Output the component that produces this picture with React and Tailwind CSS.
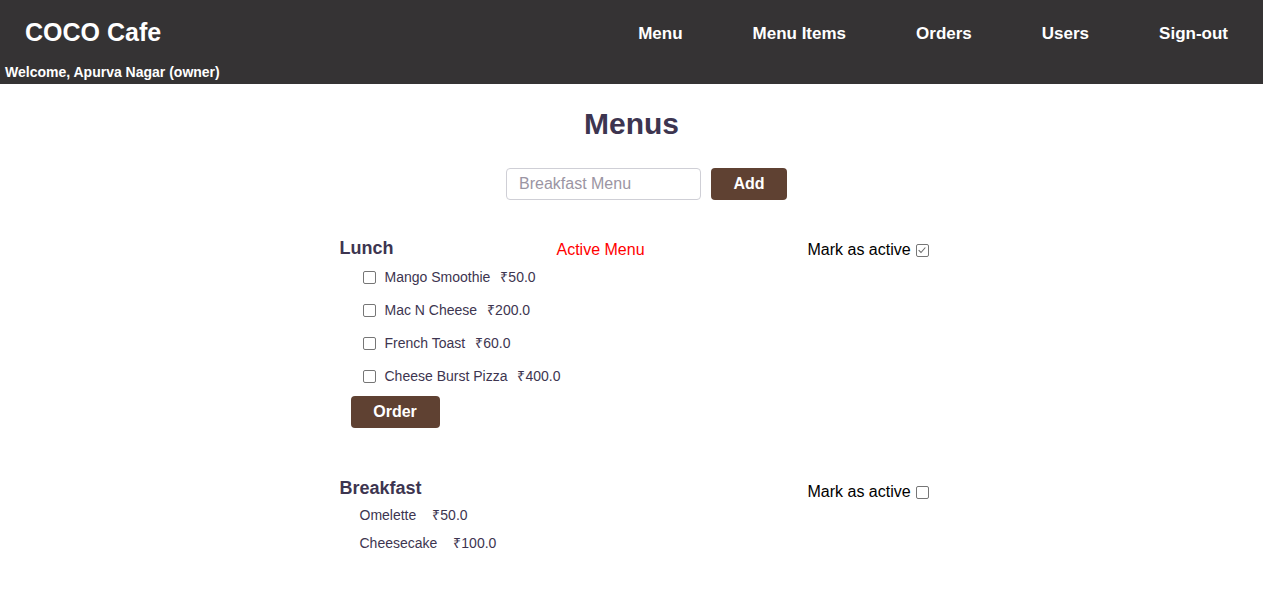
import React, { useState } from "react";

const lunchItems = [
  { id: 1, name: "Mango Smoothie", price: "₹50.0" },
  { id: 2, name: "Mac N Cheese", price: "₹200.0" },
  { id: 3, name: "French Toast", price: "₹60.0" },
  { id: 4, name: "Cheese Burst Pizza", price: "₹400.0" },
];

const breakfastItems = [
  { id: 1, name: "Omelette", price: "₹50.0" },
  { id: 2, name: "Cheesecake", price: "₹100.0" },
];

const navLinks = ["Menu", "Menu Items", "Orders", "Users", "Sign-out"];

export default function App() {
  const [menuName, setMenuName] = useState("");

  return (
    <div className="min-h-screen bg-white font-['Liberation_Sans',Arial,sans-serif]">
      {/* HEADER */}
      <div className="h-[84px] bg-[#353334] text-white">
        <div className="flex h-[66px] items-center justify-between pl-[25px] pr-[35px]">
          <h1 className="text-[25px] font-bold">COCO Cafe</h1>
          <nav className="flex gap-[70px] pt-[2px] text-[17px] font-bold">
            {navLinks.map((link) => (
              <a key={link} href="#">
                {link}
              </a>
            ))}
          </nav>
        </div>
        <div className="pl-[5px] text-[14px] font-bold leading-[12px]">
          Welcome, Apurva Nagar (owner)
        </div>
      </div>

      {/* CONTENT */}
      <div className="flex flex-col items-center text-[#3d3550]">
        <h2 className="mt-[22px] text-[30px] font-bold leading-[35px]">Menus</h2>

        <div className="ml-[30px] mt-[27px] flex gap-[10px]">
          <input
            value={menuName}
            onChange={(e) => setMenuName(e.target.value)}
            placeholder="Breakfast Menu"
            className="h-[32px] w-[195px] rounded-[4px] border border-[#cfcfd6] px-[12px] text-[16px] text-[#333] placeholder:text-[#9b95a3] outline-none"
          />
          <button className="h-[32px] w-[76px] rounded-[4px] bg-[#5f4132] text-[16px] font-bold text-white">
            Add
          </button>
        </div>
      </div>

      <div className="mx-auto mt-[38px] w-[590px] pl-[3px] text-[#3d3550]">
        {/* LUNCH */}
        <div className="grid grid-cols-[217px_251px_auto]">
          <div>
            <h3 className="text-[18px] font-bold leading-[20px]">Lunch</h3>
            <ul className="ml-[23px] mt-[3px] flex flex-col">
              {lunchItems.map((item) => (
                <li key={item.id} className="flex h-[33px] items-center whitespace-nowrap text-[14px]">
                  <span className="mr-[9px] inline-block h-[13px] w-[13px] shrink-0 rounded-[2px] border border-[#767676] bg-white" />
                  <span>{item.name}</span>
                  <span className="ml-[10px]">{item.price}</span>
                </li>
              ))}
            </ul>
            <button className="ml-[11px] mt-[3px] h-[32px] w-[89px] rounded-[4px] bg-[#5f4132] text-[16px] font-bold text-white">
              Order
            </button>
          </div>
          <div className="pt-[3px] text-[16px] leading-[18px] text-[#ff0000]">Active Menu</div>
          <div className="flex items-center gap-[5px] self-start whitespace-nowrap pt-[3px] text-[16px] leading-[18px] text-black">
            Mark as active
            <span className="flex h-[13px] w-[13px] shrink-0 items-center justify-center rounded-[2px] border border-[#767676] bg-white">
              <svg viewBox="0 0 12 12" className="h-[10px] w-[10px]">
                <path d="M2 6.2 L4.8 9 L10 3" fill="none" stroke="#6b6b6b" strokeWidth="1.3" />
              </svg>
            </span>
          </div>
        </div>

        {/* BREAKFAST */}
        <div className="mt-[50px] grid grid-cols-[468px_auto]">
          <div>
            <h3 className="text-[18px] font-bold leading-[20px]">Breakfast</h3>
            <ul className="ml-[20px] mt-[3px] flex flex-col">
              {breakfastItems.map((item) => (
                <li key={item.id} className="flex h-[28px] items-center whitespace-nowrap text-[14px]">
                  <span>{item.name}</span>
                  <span className="ml-[16px]">{item.price}</span>
                </li>
              ))}
            </ul>
          </div>
          <div className="flex items-center gap-[5px] self-start whitespace-nowrap pt-[5px] text-[16px] leading-[18px] text-black">
            Mark as active
            <span className="inline-block h-[13px] w-[13px] shrink-0 rounded-[2px] border border-[#767676] bg-white" />
          </div>
        </div>
      </div>
    </div>
  );
}
